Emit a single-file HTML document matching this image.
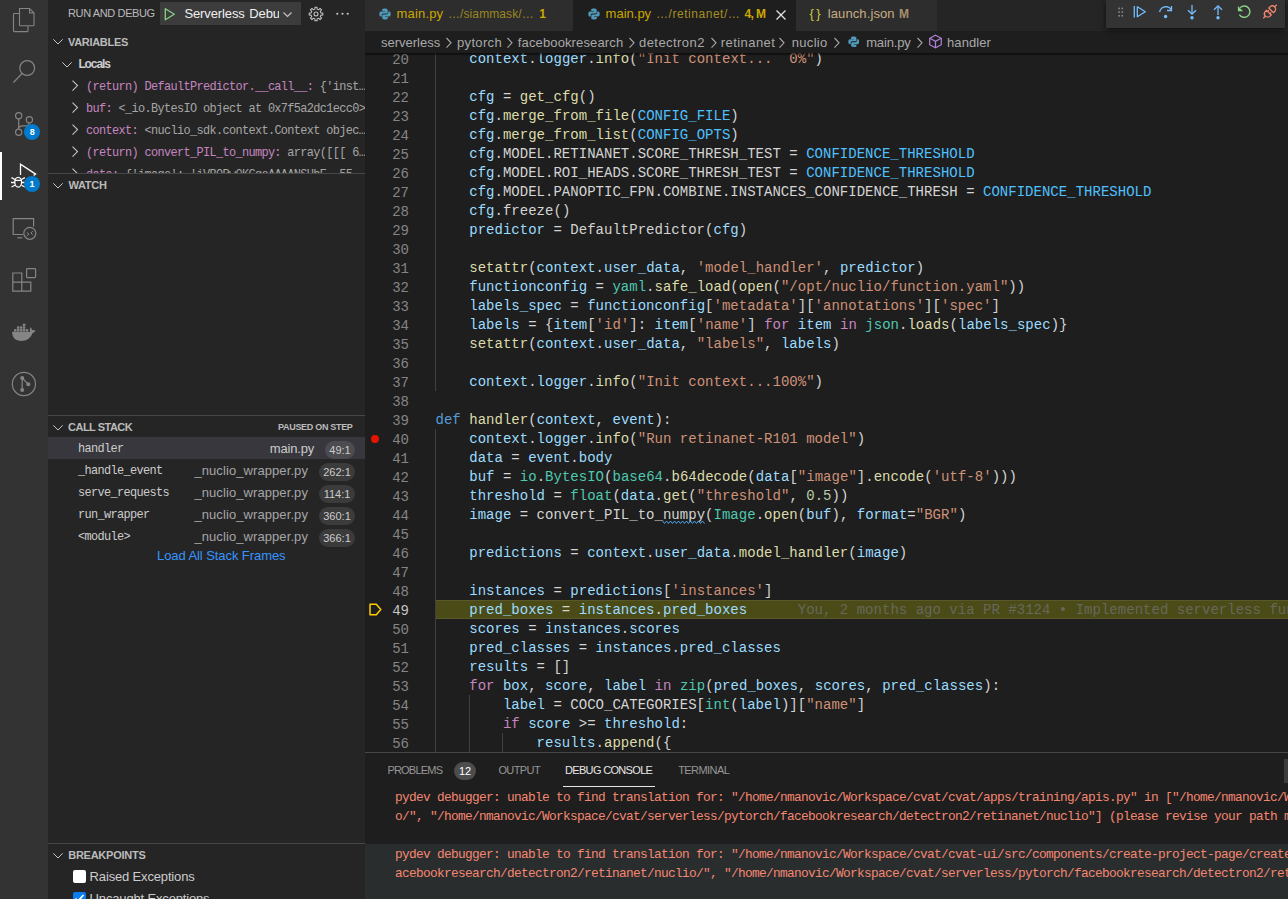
<!DOCTYPE html><html><head><meta charset="utf-8"><style>html,body{margin:0;padding:0}body{width:1288px;height:899px;overflow:hidden;position:relative;background:#1e1e1e}</style></head><body>
<div style="position:absolute;left:0px;top:0px;width:48px;height:899px;background:#333333;"></div>
<div style="position:absolute;left:0px;top:152px;width:2px;height:48px;background:#ffffff;"></div>
<svg style="position:absolute;left:0px;top:0px;" width="48" height="48" viewBox="0 0 48 48"><g fill="none" stroke="#858585" stroke-width="1.1"><path d="M19.5 13.5 H14.3 Q13.5 13.5 13.5 14.3 V30.8 Q13.5 31.6 14.3 31.6 H27.2 Q28 31.6 28 30.8 V26"/><path d="M19.5 8.5 H29.5 L34 13 V25 Q34 25.8 33.2 25.8 H20.3 Q19.5 25.8 19.5 25 Z"/><path d="M29.5 8.5 V13 H34"/></g></svg>
<svg style="position:absolute;left:0px;top:48px;" width="48" height="48" viewBox="0 0 48 48"><g fill="none" stroke="#858585" stroke-width="1.2"><circle cx="27.2" cy="20" r="7.4"/><path d="M22 25.5 L13.5 34.5"/></g></svg>
<svg style="position:absolute;left:0px;top:96px;" width="48" height="48" viewBox="0 0 48 48"><g fill="none" stroke="#858585" stroke-width="1.2"><circle cx="18.7" cy="19.7" r="3.1"/><circle cx="29.4" cy="23.7" r="3.1"/><circle cx="18.7" cy="36.2" r="3.1"/><path d="M18.7 22.8 V33.1"/><path d="M18.8 32 Q19.3 29.9 22.3 29.9 H25.2 Q28.9 29.9 29.4 26.8"/></g></svg>
<svg style="position:absolute;left:0px;top:144px;" width="48" height="48" viewBox="0 0 48 48"><g fill="none" stroke="#ffffff" stroke-width="1.3"><path d="M20.5 31 V20.3 L35.6 30.1 L33.6 31.4"/><ellipse cx="18.2" cy="38.2" rx="3.4" ry="4.9"/><path d="M14.8 36.3 H21.6 M11.5 33.6 L14.9 35.5 M24.9 33.6 L21.5 35.5 M11 38.5 H14.8 M25.4 38.5 H21.6 M11.5 43 L14.9 41.2 M24.9 43 L21.5 41.2"/></g></svg>
<svg style="position:absolute;left:0px;top:192px;" width="48" height="48" viewBox="0 0 48 48"><g fill="none" stroke="#858585" stroke-width="1.2"><path d="M23 42.5 H13.2 V26.6 H33.6 V34.5"/><path d="M17.3 45.8 H22.3"/><circle cx="29.8" cy="41.3" r="6"/><path d="M26.8 40.6 L28.9 42.1 L26.8 44 M32.8 39.2 L30.8 41.1 L32.8 42.7" stroke-width="1"/></g></svg>
<svg style="position:absolute;left:0px;top:248px;" width="48" height="48" viewBox="0 0 48 48"><g fill="none" stroke="#858585" stroke-width="1.2"><path d="M12.8 25 H21.8 V43.2 H12.8 Z M12.8 34.2 H30.8 V43.2 H21.8"/><rect x="26.6" y="20.6" width="9" height="9" rx="0.8"/></g></svg>
<svg style="position:absolute;left:0px;top:312px;" width="48" height="48" viewBox="0 0 48 48"><g fill="#858585"><path d="M12 19.8 H30 Q29.6 17 30.3 15.3 Q31.8 16.5 32.2 18.2 Q33.8 17.8 35.5 18.7 Q34.6 20.6 32.6 21 Q30 28.8 21 29 Q12.3 28.8 12 19.8 Z"/><rect x="14.0" y="17.1" width="2.45" height="2.35"/><rect x="16.95" y="17.1" width="2.45" height="2.35"/><rect x="19.9" y="17.1" width="2.45" height="2.35"/><rect x="22.85" y="17.1" width="2.45" height="2.35"/><rect x="25.8" y="17.1" width="2.45" height="2.35"/><rect x="16.95" y="14.4" width="2.45" height="2.35"/><rect x="19.9" y="14.4" width="2.45" height="2.35"/><rect x="22.85" y="14.4" width="2.45" height="2.35"/><rect x="22.85" y="11.7" width="2.45" height="2.35"/></g></svg>
<svg style="position:absolute;left:0px;top:360px;" width="48" height="48" viewBox="0 0 48 48"><g fill="none" stroke="#858585" stroke-width="1.2"><circle cx="23.9" cy="24" r="11.6"/><path d="M22.2 18 V30 M22.2 18 L28.3 24.3"/></g><g fill="#858585"><circle cx="22.2" cy="17.9" r="2"/><circle cx="28.3" cy="24.3" r="2"/><circle cx="22.2" cy="29.9" r="2"/></g></svg>
<div style="position:absolute;left:24.200000000000003px;top:124.1px;width:16px;height:16px;border-radius:8px;background:#007acc;color:#fff;font-family:'Liberation Sans', sans-serif;font-weight:700;font-size:9px;line-height:16px;text-align:center">8</div>
<div style="position:absolute;left:24px;top:175.6px;width:16px;height:16px;border-radius:8px;background:#007acc;color:#fff;font-family:'Liberation Sans', sans-serif;font-weight:700;font-size:9px;line-height:16px;text-align:center">1</div>
<div style="position:absolute;left:48px;top:0px;width:317px;height:899px;background:#252526;"></div>
<div id="t1" style="position:absolute;left:68.00px;top:3.19px;height:20px;line-height:20px;font-family:'Liberation Sans', sans-serif;font-size:11px;font-weight:400;color:#bbbbbb;letter-spacing:-0.375px;white-space:pre;">RUN AND DEBUG</div>
<div style="position:absolute;left:160px;top:2px;width:141px;height:23px;background:#3c3c3c;"></div>
<svg style="position:absolute;left:160px;top:2px;" width="20" height="23" viewBox="0 0 20 23"><path d="M5.3 6.8 V17.8 L14.3 12.3 Z" fill="none" stroke="#89d185" stroke-width="1.3" stroke-linejoin="round"/></svg>
<div style="position:absolute;left:0;top:0;width:279px;height:30px;overflow:hidden">
<div id="srv" style="position:absolute;left:184.40px;top:3.50px;height:20px;line-height:20px;font-family:'Liberation Sans', sans-serif;font-size:13px;font-weight:400;color:#f0f0f0;letter-spacing:-0.111px;white-space:pre;">Serverless</div>
<div style="position:absolute;left:249.30px;top:3.50px;height:20px;line-height:20px;font-family:'Liberation Sans', sans-serif;font-size:13px;font-weight:400;color:#f0f0f0;letter-spacing:-0.111px;white-space:pre;">Debug</div>
</div>
<svg style="position:absolute;left:280px;top:8px;" width="14" height="12" viewBox="0 0 14 12"><path d="M3.5 4.5 L7.5 8.5 L11.5 4.5" fill="none" stroke="#c5c5c5" stroke-width="1.1"/></svg>
<svg style="position:absolute;left:308.1px;top:5.7px;" width="16" height="16" viewBox="0 0 16 16"><g fill="none" stroke="#c5c5c5" stroke-width="1.05" stroke-linejoin="round"><circle cx="8" cy="8" r="2"/><path d="M6.88 3.13 L6.92 1.18 L9.08 1.18 L9.12 3.13 L10.65 3.76 L12.06 2.42 L13.58 3.94 L12.24 5.35 L12.87 6.88 L14.82 6.92 L14.82 9.08 L12.87 9.12 L12.24 10.65 L13.58 12.06 L12.06 13.58 L10.65 12.24 L9.12 12.87 L9.08 14.82 L6.92 14.82 L6.88 12.87 L5.35 12.24 L3.94 13.58 L2.42 12.06 L3.76 10.65 L3.13 9.12 L1.18 9.08 L1.18 6.92 L3.13 6.88 L3.76 5.35 L2.42 3.94 L3.94 2.42 L5.35 3.76 Z"/></g></svg>
<svg style="position:absolute;left:333.7px;top:10px;" width="18" height="8" viewBox="0 0 18 8"><g fill="#c5c5c5"><circle cx="3.3" cy="3.75" r="1.1"/><circle cx="8.5" cy="3.75" r="1.1"/><circle cx="13.7" cy="3.75" r="1.1"/></g></svg>
<svg style="position:absolute;left:52px;top:37.2px;" width="12" height="10" viewBox="0 0 12 10"><path d="M1.3 2.3 L6 7 L10.7 2.3" fill="none" stroke="#c5c5c5" stroke-width="1"/></svg>
<div id="t3" style="position:absolute;left:68.00px;top:32.19px;height:20px;line-height:20px;font-family:'Liberation Sans', sans-serif;font-size:11px;font-weight:700;color:#bbbbbb;letter-spacing:-0.312px;white-space:pre;">VARIABLES</div>
<svg style="position:absolute;left:61px;top:59.5px;" width="12" height="10" viewBox="0 0 12 10"><path d="M1.3 2.3 L6 7 L10.7 2.3" fill="none" stroke="#c5c5c5" stroke-width="1"/></svg>
<div id="t4" style="position:absolute;left:78.40px;top:53.84px;height:20px;line-height:20px;font-family:'Liberation Sans', sans-serif;font-size:12px;font-weight:700;color:#cccccc;letter-spacing:-1.100px;white-space:pre;">Locals</div>
<div style="position:absolute;left:48px;top:75px;width:317px;height:98px;overflow:hidden">
<svg style="position:absolute;left:22px;top:3.799999999999997px;" width="10" height="14" viewBox="0 0 10 14"><path d="M2.5 1.6 L7.5 6.6 L2.5 11.6" fill="none" stroke="#c5c5c5" stroke-width="1.1"/></svg>
<div style="position:absolute;left:38px;top:1.63px;height:20px;line-height:20px;font-family:'Liberation Mono', monospace;font-size:11.9px;letter-spacing:-0.640px;white-space:pre"><span style="color:#c586c0">(return) DefaultPredictor.__call__:</span><span style="color:#a5a5a5"> {'inst…</span></div>
<svg style="position:absolute;left:22px;top:25.799999999999997px;" width="10" height="14" viewBox="0 0 10 14"><path d="M2.5 1.6 L7.5 6.6 L2.5 11.6" fill="none" stroke="#c5c5c5" stroke-width="1.1"/></svg>
<div style="position:absolute;left:38px;top:23.63px;height:20px;line-height:20px;font-family:'Liberation Mono', monospace;font-size:11.9px;letter-spacing:-0.640px;white-space:pre"><span style="color:#c586c0">buf:</span><span style="color:#a5a5a5"> &lt;_io.BytesIO object at 0x7f5a2dc1ecc0&gt;</span></div>
<svg style="position:absolute;left:22px;top:47.80000000000001px;" width="10" height="14" viewBox="0 0 10 14"><path d="M2.5 1.6 L7.5 6.6 L2.5 11.6" fill="none" stroke="#c5c5c5" stroke-width="1.1"/></svg>
<div style="position:absolute;left:38px;top:45.63px;height:20px;line-height:20px;font-family:'Liberation Mono', monospace;font-size:11.9px;letter-spacing:-0.640px;white-space:pre"><span style="color:#c586c0">context:</span><span style="color:#a5a5a5"> &lt;nuclio_sdk.context.Context objec…</span></div>
<svg style="position:absolute;left:22px;top:69.80000000000001px;" width="10" height="14" viewBox="0 0 10 14"><path d="M2.5 1.6 L7.5 6.6 L2.5 11.6" fill="none" stroke="#c5c5c5" stroke-width="1.1"/></svg>
<div style="position:absolute;left:38px;top:67.63px;height:20px;line-height:20px;font-family:'Liberation Mono', monospace;font-size:11.9px;letter-spacing:-0.640px;white-space:pre"><span style="color:#c586c0">(return) convert_PIL_to_numpy:</span><span style="color:#a5a5a5"> array([[[ 6…</span></div>
<svg style="position:absolute;left:22px;top:91.80000000000001px;" width="10" height="14" viewBox="0 0 10 14"><path d="M2.5 1.6 L7.5 6.6 L2.5 11.6" fill="none" stroke="#c5c5c5" stroke-width="1.1"/></svg>
<div style="position:absolute;left:38px;top:89.63px;height:20px;line-height:20px;font-family:'Liberation Mono', monospace;font-size:11.9px;letter-spacing:-0.640px;white-space:pre"><span style="color:#c586c0">data:</span><span style="color:#a5a5a5"> {'image': 'iVBORw0KGgoAAAANSUhE… 55</span></div>
</div>
<div style="position:absolute;left:48px;top:173px;width:317px;height:1px;background:#474747;"></div>
<svg style="position:absolute;left:52px;top:181px;" width="12" height="10" viewBox="0 0 12 10"><path d="M1.3 2.3 L6 7 L10.7 2.3" fill="none" stroke="#c5c5c5" stroke-width="1"/></svg>
<div id="t5" style="position:absolute;left:68.40px;top:175.19px;height:20px;line-height:20px;font-family:'Liberation Sans', sans-serif;font-size:11px;font-weight:700;color:#bbbbbb;letter-spacing:-0.250px;white-space:pre;">WATCH</div>
<div style="position:absolute;left:48px;top:415px;width:317px;height:1px;background:#474747;"></div>
<svg style="position:absolute;left:52px;top:422.7px;" width="12" height="10" viewBox="0 0 12 10"><path d="M1.3 2.3 L6 7 L10.7 2.3" fill="none" stroke="#c5c5c5" stroke-width="1"/></svg>
<div id="t6" style="position:absolute;left:68.00px;top:417.19px;height:20px;line-height:20px;font-family:'Liberation Sans', sans-serif;font-size:11px;font-weight:700;color:#bbbbbb;letter-spacing:-0.500px;white-space:pre;">CALL STACK</div>
<div id="t7" style="position:absolute;left:278.00px;top:416.88px;height:20px;line-height:20px;font-family:'Liberation Sans', sans-serif;font-size:9px;font-weight:700;color:#bbbbbb;letter-spacing:-0.308px;white-space:pre;">PAUSED ON STEP</div>
<div style="position:absolute;left:48px;top:437px;width:317px;height:22px;background:#37373d;"></div>
<div style="position:absolute;left:78.00px;top:438.83px;height:20px;line-height:20px;font-family:'Liberation Mono', monospace;font-size:11.9px;font-weight:400;color:#cccccc;letter-spacing:-0.640px;white-space:pre;">handler</div>
<div style="position:absolute;left:325px;top:440.5px;width:30px;height:18px;background:rgba(255,255,255,0.10);border-radius:9px"></div>
<div style="position:absolute;left:325px;top:440.5px;width:30px;height:18px;line-height:18px;text-align:center;font-family:'Liberation Sans', sans-serif;font-size:11px;color:#cccccc">49:1</div>
<div id="t8" style="position:absolute;left:269.80px;top:438.50px;height:20px;line-height:20px;font-family:'Liberation Sans', sans-serif;font-size:13px;font-weight:400;color:#cccccc;letter-spacing:-0.167px;white-space:pre;">main.py</div>
<div style="position:absolute;left:78.00px;top:460.83px;height:20px;line-height:20px;font-family:'Liberation Mono', monospace;font-size:11.9px;font-weight:400;color:#cccccc;letter-spacing:-0.640px;white-space:pre;">_handle_event</div>
<div style="position:absolute;left:319px;top:462.5px;width:36px;height:18px;background:rgba(255,255,255,0.10);border-radius:9px"></div>
<div style="position:absolute;left:319px;top:462.5px;width:36px;height:18px;line-height:18px;text-align:center;font-family:'Liberation Sans', sans-serif;font-size:11px;color:#cccccc">262:1</div>
<div id="t9" style="position:absolute;left:194.40px;top:460.50px;height:20px;line-height:20px;font-family:'Liberation Sans', sans-serif;font-size:13px;font-weight:400;color:#a6a6a6;letter-spacing:0.088px;white-space:pre;">_nuclio_wrapper.py</div>
<div style="position:absolute;left:78.00px;top:482.83px;height:20px;line-height:20px;font-family:'Liberation Mono', monospace;font-size:11.9px;font-weight:400;color:#cccccc;letter-spacing:-0.640px;white-space:pre;">serve_requests</div>
<div style="position:absolute;left:319px;top:484.5px;width:36px;height:18px;background:rgba(255,255,255,0.10);border-radius:9px"></div>
<div style="position:absolute;left:319px;top:484.5px;width:36px;height:18px;line-height:18px;text-align:center;font-family:'Liberation Sans', sans-serif;font-size:11px;color:#cccccc">114:1</div>
<div id="t10" style="position:absolute;left:194.40px;top:482.50px;height:20px;line-height:20px;font-family:'Liberation Sans', sans-serif;font-size:13px;font-weight:400;color:#a6a6a6;letter-spacing:0.088px;white-space:pre;">_nuclio_wrapper.py</div>
<div style="position:absolute;left:78.00px;top:504.83px;height:20px;line-height:20px;font-family:'Liberation Mono', monospace;font-size:11.9px;font-weight:400;color:#cccccc;letter-spacing:-0.640px;white-space:pre;">run_wrapper</div>
<div style="position:absolute;left:319px;top:506.5px;width:36px;height:18px;background:rgba(255,255,255,0.10);border-radius:9px"></div>
<div style="position:absolute;left:319px;top:506.5px;width:36px;height:18px;line-height:18px;text-align:center;font-family:'Liberation Sans', sans-serif;font-size:11px;color:#cccccc">360:1</div>
<div id="t11" style="position:absolute;left:194.40px;top:504.50px;height:20px;line-height:20px;font-family:'Liberation Sans', sans-serif;font-size:13px;font-weight:400;color:#a6a6a6;letter-spacing:0.088px;white-space:pre;">_nuclio_wrapper.py</div>
<div style="position:absolute;left:78.00px;top:526.83px;height:20px;line-height:20px;font-family:'Liberation Mono', monospace;font-size:11.9px;font-weight:400;color:#cccccc;letter-spacing:-0.640px;white-space:pre;">&lt;module&gt;</div>
<div style="position:absolute;left:319px;top:528.5px;width:36px;height:18px;background:rgba(255,255,255,0.10);border-radius:9px"></div>
<div style="position:absolute;left:319px;top:528.5px;width:36px;height:18px;line-height:18px;text-align:center;font-family:'Liberation Sans', sans-serif;font-size:11px;color:#cccccc">366:1</div>
<div id="t12" style="position:absolute;left:194.40px;top:526.50px;height:20px;line-height:20px;font-family:'Liberation Sans', sans-serif;font-size:13px;font-weight:400;color:#a6a6a6;letter-spacing:0.088px;white-space:pre;">_nuclio_wrapper.py</div>
<div id="t13" style="position:absolute;left:157.00px;top:545.50px;height:20px;line-height:20px;font-family:'Liberation Sans', sans-serif;font-size:13px;font-weight:400;color:#3794ff;letter-spacing:-0.075px;white-space:pre;">Load All Stack Frames</div>
<div style="position:absolute;left:48px;top:843px;width:317px;height:1px;background:#474747;"></div>
<svg style="position:absolute;left:52px;top:850.6px;" width="12" height="10" viewBox="0 0 12 10"><path d="M1.3 2.3 L6 7 L10.7 2.3" fill="none" stroke="#c5c5c5" stroke-width="1"/></svg>
<div id="t14" style="position:absolute;left:68.20px;top:845.19px;height:20px;line-height:20px;font-family:'Liberation Sans', sans-serif;font-size:11px;font-weight:700;color:#bbbbbb;letter-spacing:-0.250px;white-space:pre;">BREAKPOINTS</div>
<div style="position:absolute;left:73px;top:870px;width:12.5px;height:12.5px;background:#ffffff;border-radius:2px"></div>
<div id="raised" style="position:absolute;left:89.60px;top:867.00px;height:20px;line-height:20px;font-family:'Liberation Sans', sans-serif;font-size:13px;font-weight:400;color:#cccccc;letter-spacing:-0.157px;white-space:pre;">Raised Exceptions</div>
<div style="position:absolute;left:73px;top:891.8px;width:12.5px;height:12.5px;background:#0a7ef0;border-radius:2px"></div>
<svg style="position:absolute;left:73px;top:891.8px;" width="13" height="13" viewBox="0 0 13 13"><path d="M2.5 6.5 L5 9 L10.5 3" fill="none" stroke="#fff" stroke-width="1.6"/></svg>
<div style="position:absolute;left:89.60px;top:888.50px;height:20px;line-height:20px;font-family:'Liberation Sans', sans-serif;font-size:13px;font-weight:400;color:#cccccc;letter-spacing:-0.157px;white-space:pre;">Uncaught Exceptions</div>
<div style="position:absolute;left:365px;top:0px;width:923px;height:31px;background:#252526;"></div>
<div style="position:absolute;left:365px;top:0px;width:208px;height:31px;background:#2d2d2d;"></div>
<div style="position:absolute;left:573px;top:0px;width:223px;height:31px;background:#1e1e1e;"></div>
<div style="position:absolute;left:796px;top:0px;width:141px;height:31px;background:#2d2d2d;"></div>
<svg style="position:absolute;left:379px;top:7.5px;" width="12" height="12" viewBox="0 0 12 12"><g transform="scale(1.0)"><path d="M5.8 0.5 C3 0.5 3.2 1.7 3.2 1.7 V3 H6 V3.5 H2 C2 3.5 0.3 3.4 0.3 6 C0.3 8.6 1.8 8.5 1.8 8.5 H2.8 V7.2 C2.8 7.2 2.7 5.6 4.3 5.6 H7.2 C7.2 5.6 8.7 5.7 8.7 4.2 V1.8 C8.7 1.8 8.9 0.5 5.8 0.5 Z" fill="#519aba"/><path d="M6.2 11.5 C9 11.5 8.8 10.3 8.8 10.3 V9 H6 V8.5 H10 C10 8.5 11.7 8.6 11.7 6 C11.7 3.4 10.2 3.5 10.2 3.5 H9.2 V4.8 C9.2 4.8 9.3 6.4 7.7 6.4 H4.8 C4.8 6.4 3.3 6.3 3.3 7.8 V10.2 C3.3 10.2 3.1 11.5 6.2 11.5 Z" fill="#519aba"/></g></svg>
<div id="t16" style="position:absolute;left:396.60px;top:3.50px;height:20px;line-height:20px;font-family:'Liberation Sans', sans-serif;font-size:13px;font-weight:400;color:#cca700;letter-spacing:0.167px;white-space:pre;">main.py</div>
<div id="t17" style="position:absolute;left:448.00px;top:3.84px;height:20px;line-height:20px;font-family:'Liberation Sans', sans-serif;font-size:12px;font-weight:400;color:#9c871f;letter-spacing:0.091px;white-space:pre;">…/siammask/…</div>
<div style="position:absolute;left:539.30px;top:3.84px;height:20px;line-height:20px;font-family:'Liberation Sans', sans-serif;font-size:12px;font-weight:700;color:#cca700;letter-spacing:0.000px;white-space:pre;">1</div>
<svg style="position:absolute;left:587.5px;top:7.5px;" width="12" height="12" viewBox="0 0 12 12"><g transform="scale(1.0)"><path d="M5.8 0.5 C3 0.5 3.2 1.7 3.2 1.7 V3 H6 V3.5 H2 C2 3.5 0.3 3.4 0.3 6 C0.3 8.6 1.8 8.5 1.8 8.5 H2.8 V7.2 C2.8 7.2 2.7 5.6 4.3 5.6 H7.2 C7.2 5.6 8.7 5.7 8.7 4.2 V1.8 C8.7 1.8 8.9 0.5 5.8 0.5 Z" fill="#519aba"/><path d="M6.2 11.5 C9 11.5 8.8 10.3 8.8 10.3 V9 H6 V8.5 H10 C10 8.5 11.7 8.6 11.7 6 C11.7 3.4 10.2 3.5 10.2 3.5 H9.2 V4.8 C9.2 4.8 9.3 6.4 7.7 6.4 H4.8 C4.8 6.4 3.3 6.3 3.3 7.8 V10.2 C3.3 10.2 3.1 11.5 6.2 11.5 Z" fill="#519aba"/></g></svg>
<div id="t18" style="position:absolute;left:605.60px;top:3.50px;height:20px;line-height:20px;font-family:'Liberation Sans', sans-serif;font-size:13px;font-weight:400;color:#cca700;letter-spacing:0.000px;white-space:pre;">main.py</div>
<div id="t19" style="position:absolute;left:656.00px;top:3.84px;height:20px;line-height:20px;font-family:'Liberation Sans', sans-serif;font-size:12px;font-weight:400;color:#a68f22;letter-spacing:0.542px;white-space:pre;">…/retinanet/…</div>
<div id="t20" style="position:absolute;left:744.60px;top:3.84px;height:20px;line-height:20px;font-family:'Liberation Sans', sans-serif;font-size:12px;font-weight:700;color:#cca700;letter-spacing:-0.667px;white-space:pre;">4, M</div>
<svg style="position:absolute;left:774px;top:8px;" width="14" height="14" viewBox="0 0 14 14"><path d="M2.5 2.5 L11.5 11.5 M11.5 2.5 L2.5 11.5" fill="none" stroke="#e8e8e8" stroke-width="1.2"/></svg>
<div style="position:absolute;left:809.50px;top:3.50px;height:20px;line-height:20px;font-family:'Liberation Sans', sans-serif;font-size:13px;font-weight:400;color:#cbcb41;letter-spacing:-0.600px;white-space:pre;">{ }</div>
<div id="t21" style="position:absolute;left:827.80px;top:3.50px;height:20px;line-height:20px;font-family:'Liberation Sans', sans-serif;font-size:13px;font-weight:400;color:#c9ae85;letter-spacing:0.100px;white-space:pre;">launch.json</div>
<div style="position:absolute;left:899.00px;top:3.84px;height:20px;line-height:20px;font-family:'Liberation Sans', sans-serif;font-size:12px;font-weight:700;color:#a88e6c;letter-spacing:0.000px;white-space:pre;">M</div>
<div style="position:absolute;left:365px;top:31px;width:923px;height:22px;background:#1e1e1e;"></div>
<div id="t22" style="position:absolute;left:381.00px;top:32.80px;height:20px;line-height:20px;font-family:'Liberation Sans', sans-serif;font-size:13px;font-weight:400;color:#a9a9a9;letter-spacing:0.000px;white-space:pre;">serverless</div>
<div id="t23" style="position:absolute;left:457.00px;top:32.80px;height:20px;line-height:20px;font-family:'Liberation Sans', sans-serif;font-size:13px;font-weight:400;color:#a9a9a9;letter-spacing:0.333px;white-space:pre;">pytorch</div>
<div id="t24" style="position:absolute;left:517.80px;top:32.80px;height:20px;line-height:20px;font-family:'Liberation Sans', sans-serif;font-size:13px;font-weight:400;color:#a9a9a9;letter-spacing:0.133px;white-space:pre;">facebookresearch</div>
<div id="t25" style="position:absolute;left:639.00px;top:32.80px;height:20px;line-height:20px;font-family:'Liberation Sans', sans-serif;font-size:13px;font-weight:400;color:#a9a9a9;letter-spacing:0.445px;white-space:pre;">detectron2</div>
<div id="t26" style="position:absolute;left:720.80px;top:32.80px;height:20px;line-height:20px;font-family:'Liberation Sans', sans-serif;font-size:13px;font-weight:400;color:#a9a9a9;letter-spacing:0.438px;white-space:pre;">retinanet</div>
<div id="t27" style="position:absolute;left:791.80px;top:32.80px;height:20px;line-height:20px;font-family:'Liberation Sans', sans-serif;font-size:13px;font-weight:400;color:#a9a9a9;letter-spacing:0.300px;white-space:pre;">nuclio</div>
<div id="t28" style="position:absolute;left:866.20px;top:32.80px;height:20px;line-height:20px;font-family:'Liberation Sans', sans-serif;font-size:13px;font-weight:400;color:#a9a9a9;letter-spacing:-0.167px;white-space:pre;">main.py</div>
<div id="t29" style="position:absolute;left:947.00px;top:32.80px;height:20px;line-height:20px;font-family:'Liberation Sans', sans-serif;font-size:13px;font-weight:400;color:#a9a9a9;letter-spacing:0.083px;white-space:pre;">handler</div>
<svg style="position:absolute;left:445.4px;top:36px;" width="8" height="14" viewBox="0 0 8 14"><path d="M1.5 2 L6 6.8 L1.5 11.6" fill="none" stroke="#a9a9a9" stroke-width="1.1"/></svg>
<svg style="position:absolute;left:506.2px;top:36px;" width="8" height="14" viewBox="0 0 8 14"><path d="M1.5 2 L6 6.8 L1.5 11.6" fill="none" stroke="#a9a9a9" stroke-width="1.1"/></svg>
<svg style="position:absolute;left:627.8px;top:36px;" width="8" height="14" viewBox="0 0 8 14"><path d="M1.5 2 L6 6.8 L1.5 11.6" fill="none" stroke="#a9a9a9" stroke-width="1.1"/></svg>
<svg style="position:absolute;left:710.0px;top:36px;" width="8" height="14" viewBox="0 0 8 14"><path d="M1.5 2 L6 6.8 L1.5 11.6" fill="none" stroke="#a9a9a9" stroke-width="1.1"/></svg>
<svg style="position:absolute;left:778.0px;top:36px;" width="8" height="14" viewBox="0 0 8 14"><path d="M1.5 2 L6 6.8 L1.5 11.6" fill="none" stroke="#a9a9a9" stroke-width="1.1"/></svg>
<svg style="position:absolute;left:832.5px;top:36px;" width="8" height="14" viewBox="0 0 8 14"><path d="M1.5 2 L6 6.8 L1.5 11.6" fill="none" stroke="#a9a9a9" stroke-width="1.1"/></svg>
<svg style="position:absolute;left:915.9px;top:36px;" width="8" height="14" viewBox="0 0 8 14"><path d="M1.5 2 L6 6.8 L1.5 11.6" fill="none" stroke="#a9a9a9" stroke-width="1.1"/></svg>
<svg style="position:absolute;left:847.8px;top:36.2px;" width="11.5" height="11.5" viewBox="0 0 11.5 11.5"><g transform="scale(0.9583333333333334)"><path d="M5.8 0.5 C3 0.5 3.2 1.7 3.2 1.7 V3 H6 V3.5 H2 C2 3.5 0.3 3.4 0.3 6 C0.3 8.6 1.8 8.5 1.8 8.5 H2.8 V7.2 C2.8 7.2 2.7 5.6 4.3 5.6 H7.2 C7.2 5.6 8.7 5.7 8.7 4.2 V1.8 C8.7 1.8 8.9 0.5 5.8 0.5 Z" fill="#519aba"/><path d="M6.2 11.5 C9 11.5 8.8 10.3 8.8 10.3 V9 H6 V8.5 H10 C10 8.5 11.7 8.6 11.7 6 C11.7 3.4 10.2 3.5 10.2 3.5 H9.2 V4.8 C9.2 4.8 9.3 6.4 7.7 6.4 H4.8 C4.8 6.4 3.3 6.3 3.3 7.8 V10.2 C3.3 10.2 3.1 11.5 6.2 11.5 Z" fill="#519aba"/></g></svg>
<svg style="position:absolute;left:928px;top:33.8px;" width="15" height="15" viewBox="0 0 15 15"><g fill="none" stroke="#b180d7" stroke-width="1.2"><path d="M7.5 1.2 L13.3 4.3 V10.7 L7.5 13.8 L1.7 10.7 V4.3 Z"/><path d="M1.7 4.3 L7.5 7.4 L13.3 4.3 M7.5 7.4 V13.8"/></g></svg>
<div style="position:absolute;left:365px;top:53px;width:923px;height:699px;overflow:hidden">
<div style="position:absolute;left:0;width:44px;top:-2.2px;height:19px;line-height:19px;text-align:right;font-family:'Liberation Mono', monospace;font-size:14px;color:#858585">20</div>
<div style="position:absolute;left:70.5px;top:-3.4px;height:19px;line-height:19px;font-family:'Liberation Mono', monospace;font-size:14px;letter-spacing:0.021px;color:#d4d4d4;white-space:pre">    <span style="color:#9cdcfe">context</span>.<span style="color:#9cdcfe">logger</span>.<span style="color:#dcdcaa">info</span>(<span style="color:#ce9178">&quot;Init context...  0%&quot;</span>)</div>
<div style="position:absolute;left:0;width:44px;top:16.8px;height:19px;line-height:19px;text-align:right;font-family:'Liberation Mono', monospace;font-size:14px;color:#858585">21</div>
<div style="position:absolute;left:70.5px;top:15.6px;height:19px;line-height:19px;font-family:'Liberation Mono', monospace;font-size:14px;letter-spacing:0.021px;color:#d4d4d4;white-space:pre"></div>
<div style="position:absolute;left:0;width:44px;top:35.8px;height:19px;line-height:19px;text-align:right;font-family:'Liberation Mono', monospace;font-size:14px;color:#858585">22</div>
<div style="position:absolute;left:70.5px;top:34.6px;height:19px;line-height:19px;font-family:'Liberation Mono', monospace;font-size:14px;letter-spacing:0.021px;color:#d4d4d4;white-space:pre">    <span style="color:#9cdcfe">cfg</span> = <span style="color:#dcdcaa">get_cfg</span>()</div>
<div style="position:absolute;left:0;width:44px;top:54.8px;height:19px;line-height:19px;text-align:right;font-family:'Liberation Mono', monospace;font-size:14px;color:#858585">23</div>
<div style="position:absolute;left:70.5px;top:53.6px;height:19px;line-height:19px;font-family:'Liberation Mono', monospace;font-size:14px;letter-spacing:0.021px;color:#d4d4d4;white-space:pre">    <span style="color:#9cdcfe">cfg</span>.<span style="color:#dcdcaa">merge_from_file</span>(<span style="color:#4fc1ff">CONFIG_FILE</span>)</div>
<div style="position:absolute;left:0;width:44px;top:73.8px;height:19px;line-height:19px;text-align:right;font-family:'Liberation Mono', monospace;font-size:14px;color:#858585">24</div>
<div style="position:absolute;left:70.5px;top:72.6px;height:19px;line-height:19px;font-family:'Liberation Mono', monospace;font-size:14px;letter-spacing:0.021px;color:#d4d4d4;white-space:pre">    <span style="color:#9cdcfe">cfg</span>.<span style="color:#dcdcaa">merge_from_list</span>(<span style="color:#4fc1ff">CONFIG_OPTS</span>)</div>
<div style="position:absolute;left:0;width:44px;top:92.8px;height:19px;line-height:19px;text-align:right;font-family:'Liberation Mono', monospace;font-size:14px;color:#858585">25</div>
<div style="position:absolute;left:70.5px;top:91.6px;height:19px;line-height:19px;font-family:'Liberation Mono', monospace;font-size:14px;letter-spacing:0.021px;color:#d4d4d4;white-space:pre">    <span style="color:#9cdcfe">cfg</span>.MODEL.RETINANET.SCORE_THRESH_TEST = <span style="color:#4fc1ff">CONFIDENCE_THRESHOLD</span></div>
<div style="position:absolute;left:0;width:44px;top:111.8px;height:19px;line-height:19px;text-align:right;font-family:'Liberation Mono', monospace;font-size:14px;color:#858585">26</div>
<div style="position:absolute;left:70.5px;top:110.6px;height:19px;line-height:19px;font-family:'Liberation Mono', monospace;font-size:14px;letter-spacing:0.021px;color:#d4d4d4;white-space:pre">    <span style="color:#9cdcfe">cfg</span>.MODEL.ROI_HEADS.SCORE_THRESH_TEST = <span style="color:#4fc1ff">CONFIDENCE_THRESHOLD</span></div>
<div style="position:absolute;left:0;width:44px;top:130.8px;height:19px;line-height:19px;text-align:right;font-family:'Liberation Mono', monospace;font-size:14px;color:#858585">27</div>
<div style="position:absolute;left:70.5px;top:129.6px;height:19px;line-height:19px;font-family:'Liberation Mono', monospace;font-size:14px;letter-spacing:0.021px;color:#d4d4d4;white-space:pre">    <span style="color:#9cdcfe">cfg</span>.MODEL.PANOPTIC_FPN.COMBINE.INSTANCES_CONFIDENCE_THRESH = <span style="color:#4fc1ff">CONFIDENCE_THRESHOLD</span></div>
<div style="position:absolute;left:0;width:44px;top:149.8px;height:19px;line-height:19px;text-align:right;font-family:'Liberation Mono', monospace;font-size:14px;color:#858585">28</div>
<div style="position:absolute;left:70.5px;top:148.6px;height:19px;line-height:19px;font-family:'Liberation Mono', monospace;font-size:14px;letter-spacing:0.021px;color:#d4d4d4;white-space:pre">    <span style="color:#9cdcfe">cfg</span>.<span style="color:#d4d4d4">freeze</span>()</div>
<div style="position:absolute;left:0;width:44px;top:168.8px;height:19px;line-height:19px;text-align:right;font-family:'Liberation Mono', monospace;font-size:14px;color:#858585">29</div>
<div style="position:absolute;left:70.5px;top:167.6px;height:19px;line-height:19px;font-family:'Liberation Mono', monospace;font-size:14px;letter-spacing:0.021px;color:#d4d4d4;white-space:pre">    <span style="color:#9cdcfe">predictor</span> = DefaultPredictor(<span style="color:#9cdcfe">cfg</span>)</div>
<div style="position:absolute;left:0;width:44px;top:187.8px;height:19px;line-height:19px;text-align:right;font-family:'Liberation Mono', monospace;font-size:14px;color:#858585">30</div>
<div style="position:absolute;left:70.5px;top:186.6px;height:19px;line-height:19px;font-family:'Liberation Mono', monospace;font-size:14px;letter-spacing:0.021px;color:#d4d4d4;white-space:pre"></div>
<div style="position:absolute;left:0;width:44px;top:206.8px;height:19px;line-height:19px;text-align:right;font-family:'Liberation Mono', monospace;font-size:14px;color:#858585">31</div>
<div style="position:absolute;left:70.5px;top:205.6px;height:19px;line-height:19px;font-family:'Liberation Mono', monospace;font-size:14px;letter-spacing:0.021px;color:#d4d4d4;white-space:pre">    <span style="color:#dcdcaa">setattr</span>(<span style="color:#9cdcfe">context</span>.<span style="color:#9cdcfe">user_data</span>, <span style="color:#ce9178">&#x27;model_handler&#x27;</span>, <span style="color:#9cdcfe">predictor</span>)</div>
<div style="position:absolute;left:0;width:44px;top:225.8px;height:19px;line-height:19px;text-align:right;font-family:'Liberation Mono', monospace;font-size:14px;color:#858585">32</div>
<div style="position:absolute;left:70.5px;top:224.6px;height:19px;line-height:19px;font-family:'Liberation Mono', monospace;font-size:14px;letter-spacing:0.021px;color:#d4d4d4;white-space:pre">    <span style="color:#9cdcfe">functionconfig</span> = <span style="color:#4ec9b0">yaml</span>.<span style="color:#dcdcaa">safe_load</span>(<span style="color:#dcdcaa">open</span>(<span style="color:#ce9178">&quot;/opt/nuclio/function.yaml&quot;</span>))</div>
<div style="position:absolute;left:0;width:44px;top:244.8px;height:19px;line-height:19px;text-align:right;font-family:'Liberation Mono', monospace;font-size:14px;color:#858585">33</div>
<div style="position:absolute;left:70.5px;top:243.6px;height:19px;line-height:19px;font-family:'Liberation Mono', monospace;font-size:14px;letter-spacing:0.021px;color:#d4d4d4;white-space:pre">    <span style="color:#9cdcfe">labels_spec</span> = <span style="color:#9cdcfe">functionconfig</span>[<span style="color:#ce9178">&#x27;metadata&#x27;</span>][<span style="color:#ce9178">&#x27;annotations&#x27;</span>][<span style="color:#ce9178">&#x27;spec&#x27;</span>]</div>
<div style="position:absolute;left:0;width:44px;top:263.8px;height:19px;line-height:19px;text-align:right;font-family:'Liberation Mono', monospace;font-size:14px;color:#858585">34</div>
<div style="position:absolute;left:70.5px;top:262.6px;height:19px;line-height:19px;font-family:'Liberation Mono', monospace;font-size:14px;letter-spacing:0.021px;color:#d4d4d4;white-space:pre">    <span style="color:#9cdcfe">labels</span> = {<span style="color:#9cdcfe">item</span>[<span style="color:#ce9178">&#x27;id&#x27;</span>]: <span style="color:#9cdcfe">item</span>[<span style="color:#ce9178">&#x27;name&#x27;</span>] <span style="color:#c586c0">for</span> <span style="color:#9cdcfe">item</span> <span style="color:#c586c0">in</span> <span style="color:#4ec9b0">json</span>.<span style="color:#dcdcaa">loads</span>(<span style="color:#9cdcfe">labels_spec</span>)}</div>
<div style="position:absolute;left:0;width:44px;top:282.8px;height:19px;line-height:19px;text-align:right;font-family:'Liberation Mono', monospace;font-size:14px;color:#858585">35</div>
<div style="position:absolute;left:70.5px;top:281.6px;height:19px;line-height:19px;font-family:'Liberation Mono', monospace;font-size:14px;letter-spacing:0.021px;color:#d4d4d4;white-space:pre">    <span style="color:#dcdcaa">setattr</span>(<span style="color:#9cdcfe">context</span>.<span style="color:#9cdcfe">user_data</span>, <span style="color:#ce9178">&quot;labels&quot;</span>, <span style="color:#9cdcfe">labels</span>)</div>
<div style="position:absolute;left:0;width:44px;top:301.8px;height:19px;line-height:19px;text-align:right;font-family:'Liberation Mono', monospace;font-size:14px;color:#858585">36</div>
<div style="position:absolute;left:70.5px;top:300.6px;height:19px;line-height:19px;font-family:'Liberation Mono', monospace;font-size:14px;letter-spacing:0.021px;color:#d4d4d4;white-space:pre"></div>
<div style="position:absolute;left:0;width:44px;top:320.8px;height:19px;line-height:19px;text-align:right;font-family:'Liberation Mono', monospace;font-size:14px;color:#858585">37</div>
<div style="position:absolute;left:70.5px;top:319.6px;height:19px;line-height:19px;font-family:'Liberation Mono', monospace;font-size:14px;letter-spacing:0.021px;color:#d4d4d4;white-space:pre">    <span style="color:#9cdcfe">context</span>.<span style="color:#9cdcfe">logger</span>.<span style="color:#dcdcaa">info</span>(<span style="color:#ce9178">&quot;Init context...100%&quot;</span>)</div>
<div style="position:absolute;left:0;width:44px;top:339.8px;height:19px;line-height:19px;text-align:right;font-family:'Liberation Mono', monospace;font-size:14px;color:#858585">38</div>
<div style="position:absolute;left:70.5px;top:338.6px;height:19px;line-height:19px;font-family:'Liberation Mono', monospace;font-size:14px;letter-spacing:0.021px;color:#d4d4d4;white-space:pre"></div>
<div style="position:absolute;left:0;width:44px;top:358.8px;height:19px;line-height:19px;text-align:right;font-family:'Liberation Mono', monospace;font-size:14px;color:#858585">39</div>
<div style="position:absolute;left:70.5px;top:357.6px;height:19px;line-height:19px;font-family:'Liberation Mono', monospace;font-size:14px;letter-spacing:0.021px;color:#d4d4d4;white-space:pre"><span style="color:#569cd6">def</span> <span style="color:#dcdcaa">handler</span>(<span style="color:#9cdcfe">context</span>, <span style="color:#9cdcfe">event</span>):</div>
<div style="position:absolute;left:0;width:44px;top:377.8px;height:19px;line-height:19px;text-align:right;font-family:'Liberation Mono', monospace;font-size:14px;color:#858585">40</div>
<div style="position:absolute;left:70.5px;top:376.6px;height:19px;line-height:19px;font-family:'Liberation Mono', monospace;font-size:14px;letter-spacing:0.021px;color:#d4d4d4;white-space:pre">    <span style="color:#9cdcfe">context</span>.<span style="color:#9cdcfe">logger</span>.<span style="color:#dcdcaa">info</span>(<span style="color:#ce9178">&quot;Run retinanet-R101 model&quot;</span>)</div>
<div style="position:absolute;left:0;width:44px;top:396.8px;height:19px;line-height:19px;text-align:right;font-family:'Liberation Mono', monospace;font-size:14px;color:#858585">41</div>
<div style="position:absolute;left:70.5px;top:395.6px;height:19px;line-height:19px;font-family:'Liberation Mono', monospace;font-size:14px;letter-spacing:0.021px;color:#d4d4d4;white-space:pre">    <span style="color:#9cdcfe">data</span> = <span style="color:#9cdcfe">event</span>.<span style="color:#9cdcfe">body</span></div>
<div style="position:absolute;left:0;width:44px;top:415.8px;height:19px;line-height:19px;text-align:right;font-family:'Liberation Mono', monospace;font-size:14px;color:#858585">42</div>
<div style="position:absolute;left:70.5px;top:414.6px;height:19px;line-height:19px;font-family:'Liberation Mono', monospace;font-size:14px;letter-spacing:0.021px;color:#d4d4d4;white-space:pre">    <span style="color:#9cdcfe">buf</span> = <span style="color:#4ec9b0">io</span>.<span style="color:#4ec9b0">BytesIO</span>(<span style="color:#4ec9b0">base64</span>.<span style="color:#dcdcaa">b64decode</span>(<span style="color:#9cdcfe">data</span>[<span style="color:#ce9178">&quot;image&quot;</span>].<span style="color:#dcdcaa">encode</span>(<span style="color:#ce9178">&#x27;utf-8&#x27;</span>)))</div>
<div style="position:absolute;left:0;width:44px;top:434.8px;height:19px;line-height:19px;text-align:right;font-family:'Liberation Mono', monospace;font-size:14px;color:#858585">43</div>
<div style="position:absolute;left:70.5px;top:433.6px;height:19px;line-height:19px;font-family:'Liberation Mono', monospace;font-size:14px;letter-spacing:0.021px;color:#d4d4d4;white-space:pre">    <span style="color:#9cdcfe">threshold</span> = <span style="color:#4ec9b0">float</span>(<span style="color:#9cdcfe">data</span>.<span style="color:#dcdcaa">get</span>(<span style="color:#ce9178">&quot;threshold&quot;</span>, <span style="color:#b5cea8">0.5</span>))</div>
<div style="position:absolute;left:0;width:44px;top:453.8px;height:19px;line-height:19px;text-align:right;font-family:'Liberation Mono', monospace;font-size:14px;color:#858585">44</div>
<div style="position:absolute;left:70.5px;top:452.6px;height:19px;line-height:19px;font-family:'Liberation Mono', monospace;font-size:14px;letter-spacing:0.021px;color:#d4d4d4;white-space:pre">    <span style="color:#9cdcfe">image</span> = <span style="color:#d4d4d4">convert_PIL_to_numpy</span>(<span style="color:#4ec9b0">Image</span>.<span style="color:#dcdcaa">open</span>(<span style="color:#9cdcfe">buf</span>), <span style="color:#9cdcfe">format</span>=<span style="color:#ce9178">&quot;BGR&quot;</span>)</div>
<div style="position:absolute;left:0;width:44px;top:472.8px;height:19px;line-height:19px;text-align:right;font-family:'Liberation Mono', monospace;font-size:14px;color:#858585">45</div>
<div style="position:absolute;left:70.5px;top:471.6px;height:19px;line-height:19px;font-family:'Liberation Mono', monospace;font-size:14px;letter-spacing:0.021px;color:#d4d4d4;white-space:pre"></div>
<div style="position:absolute;left:0;width:44px;top:491.8px;height:19px;line-height:19px;text-align:right;font-family:'Liberation Mono', monospace;font-size:14px;color:#858585">46</div>
<div style="position:absolute;left:70.5px;top:490.6px;height:19px;line-height:19px;font-family:'Liberation Mono', monospace;font-size:14px;letter-spacing:0.021px;color:#d4d4d4;white-space:pre">    <span style="color:#9cdcfe">predictions</span> = <span style="color:#9cdcfe">context</span>.<span style="color:#9cdcfe">user_data</span>.<span style="color:#dcdcaa">model_handler</span>(<span style="color:#9cdcfe">image</span>)</div>
<div style="position:absolute;left:0;width:44px;top:510.8px;height:19px;line-height:19px;text-align:right;font-family:'Liberation Mono', monospace;font-size:14px;color:#858585">47</div>
<div style="position:absolute;left:70.5px;top:509.6px;height:19px;line-height:19px;font-family:'Liberation Mono', monospace;font-size:14px;letter-spacing:0.021px;color:#d4d4d4;white-space:pre"></div>
<div style="position:absolute;left:0;width:44px;top:529.8px;height:19px;line-height:19px;text-align:right;font-family:'Liberation Mono', monospace;font-size:14px;color:#858585">48</div>
<div style="position:absolute;left:70.5px;top:528.6px;height:19px;line-height:19px;font-family:'Liberation Mono', monospace;font-size:14px;letter-spacing:0.021px;color:#d4d4d4;white-space:pre">    <span style="color:#9cdcfe">instances</span> = <span style="color:#9cdcfe">predictions</span>[<span style="color:#ce9178">&#x27;instances&#x27;</span>]</div>
<div style="position:absolute;left:70px;top:547px;width:900px;height:19px;background:#4b4b18;box-shadow:inset 0 1px 0 #58582a, inset 0 -1px 0 #58582a"></div>
<div style="position:absolute;left:0;width:44px;top:548.8px;height:19px;line-height:19px;text-align:right;font-family:'Liberation Mono', monospace;font-size:14px;color:#c6c6c6">49</div>
<div style="position:absolute;left:70.5px;top:547.6px;height:19px;line-height:19px;font-family:'Liberation Mono', monospace;font-size:14px;letter-spacing:0.021px;color:#d4d4d4;white-space:pre">    <span style="color:#9cdcfe">pred_boxes</span> = <span style="color:#9cdcfe">instances</span>.<span style="color:#9cdcfe">pred_boxes</span><span style="color:#66685a">      You, 2 months ago via PR #3124 • Implemented serverless function for retinanet</span></div>
<div style="position:absolute;left:0;width:44px;top:567.8px;height:19px;line-height:19px;text-align:right;font-family:'Liberation Mono', monospace;font-size:14px;color:#858585">50</div>
<div style="position:absolute;left:70.5px;top:566.6px;height:19px;line-height:19px;font-family:'Liberation Mono', monospace;font-size:14px;letter-spacing:0.021px;color:#d4d4d4;white-space:pre">    <span style="color:#9cdcfe">scores</span> = <span style="color:#9cdcfe">instances</span>.<span style="color:#9cdcfe">scores</span></div>
<div style="position:absolute;left:0;width:44px;top:586.8px;height:19px;line-height:19px;text-align:right;font-family:'Liberation Mono', monospace;font-size:14px;color:#858585">51</div>
<div style="position:absolute;left:70.5px;top:585.6px;height:19px;line-height:19px;font-family:'Liberation Mono', monospace;font-size:14px;letter-spacing:0.021px;color:#d4d4d4;white-space:pre">    <span style="color:#9cdcfe">pred_classes</span> = <span style="color:#9cdcfe">instances</span>.<span style="color:#9cdcfe">pred_classes</span></div>
<div style="position:absolute;left:0;width:44px;top:605.8px;height:19px;line-height:19px;text-align:right;font-family:'Liberation Mono', monospace;font-size:14px;color:#858585">52</div>
<div style="position:absolute;left:70.5px;top:604.6px;height:19px;line-height:19px;font-family:'Liberation Mono', monospace;font-size:14px;letter-spacing:0.021px;color:#d4d4d4;white-space:pre">    <span style="color:#9cdcfe">results</span> = []</div>
<div style="position:absolute;left:0;width:44px;top:624.8px;height:19px;line-height:19px;text-align:right;font-family:'Liberation Mono', monospace;font-size:14px;color:#858585">53</div>
<div style="position:absolute;left:70.5px;top:623.6px;height:19px;line-height:19px;font-family:'Liberation Mono', monospace;font-size:14px;letter-spacing:0.021px;color:#d4d4d4;white-space:pre">    <span style="color:#c586c0">for</span> <span style="color:#9cdcfe">box</span>, <span style="color:#9cdcfe">score</span>, <span style="color:#9cdcfe">label</span> <span style="color:#c586c0">in</span> <span style="color:#4ec9b0">zip</span>(<span style="color:#9cdcfe">pred_boxes</span>, <span style="color:#9cdcfe">scores</span>, <span style="color:#9cdcfe">pred_classes</span>):</div>
<div style="position:absolute;left:0;width:44px;top:643.8px;height:19px;line-height:19px;text-align:right;font-family:'Liberation Mono', monospace;font-size:14px;color:#858585">54</div>
<div style="position:absolute;left:70.5px;top:642.6px;height:19px;line-height:19px;font-family:'Liberation Mono', monospace;font-size:14px;letter-spacing:0.021px;color:#d4d4d4;white-space:pre">        <span style="color:#9cdcfe">label</span> = COCO_CATEGORIES[<span style="color:#4ec9b0">int</span>(<span style="color:#9cdcfe">label</span>)][<span style="color:#ce9178">&quot;name&quot;</span>]</div>
<div style="position:absolute;left:0;width:44px;top:662.8px;height:19px;line-height:19px;text-align:right;font-family:'Liberation Mono', monospace;font-size:14px;color:#858585">55</div>
<div style="position:absolute;left:70.5px;top:661.6px;height:19px;line-height:19px;font-family:'Liberation Mono', monospace;font-size:14px;letter-spacing:0.021px;color:#d4d4d4;white-space:pre">        <span style="color:#c586c0">if</span> <span style="color:#9cdcfe">score</span> &gt;= <span style="color:#9cdcfe">threshold</span>:</div>
<div style="position:absolute;left:0;width:44px;top:681.8px;height:19px;line-height:19px;text-align:right;font-family:'Liberation Mono', monospace;font-size:14px;color:#858585">56</div>
<div style="position:absolute;left:70.5px;top:680.6px;height:19px;line-height:19px;font-family:'Liberation Mono', monospace;font-size:14px;letter-spacing:0.021px;color:#d4d4d4;white-space:pre">            <span style="color:#9cdcfe">results</span>.<span style="color:#dcdcaa">append</span>({</div>
<div style="position:absolute;left:70px;top:0px;width:1px;height:338px;background:#404040"></div>
<div style="position:absolute;left:70px;top:376px;width:1px;height:323px;background:#404040"></div>
<div style="position:absolute;left:104px;top:642px;width:1px;height:57px;background:#404040"></div>
<div style="position:absolute;left:137px;top:680px;width:1px;height:19px;background:#404040"></div>
</div>
<div style="position:absolute;left:370.7px;top:434.5px;width:8.5px;height:8.5px;border-radius:50%;background:#e51400"></div>
<svg style="position:absolute;left:368px;top:602px;" width="15" height="15" viewBox="0 0 15 15"><path d="M2 2.2 H8.3 L12.8 7.5 L8.3 12.8 H2 Z" fill="none" stroke="#ffcc00" stroke-width="1.5" stroke-linejoin="round"/></svg>
<svg style="position:absolute;left:662px;top:520px" width="44" height="5"><path d="M0.5 1 L2.5 3.5 L4.5 1 L6.5 3.5 L8.5 1 L10.5 3.5 L12.5 1 L14.5 3.5 L16.5 1 L18.5 3.5 L20.5 1 L22.5 3.5 L24.5 1 L26.5 3.5 L28.5 1 L30.5 3.5 L32.5 1 L34.5 3.5 L36.5 1 L38.5 3.5 L40.5 1 L42.5 3.5" fill="none" stroke="#4da3e8" stroke-width="1"/></svg>
<div style="position:absolute;left:365px;top:53px;width:923px;height:3px;background:linear-gradient(#000000aa,#00000000)"></div>
<div style="position:absolute;left:1106px;top:0;width:179px;height:28px;background:#333333;box-shadow:0 2px 6px rgba(0,0,0,0.6)"></div>
<svg style="position:absolute;left:1116px;top:5px;" width="10" height="16" viewBox="0 0 10 16"><g fill="#8a8a8a"><rect x="2.3" y="2.6" width="1.6" height="1.6"/><rect x="5.5" y="2.6" width="1.6" height="1.6"/><rect x="2.3" y="6.3" width="1.6" height="1.6"/><rect x="5.5" y="6.3" width="1.6" height="1.6"/><rect x="2.3" y="10" width="1.6" height="1.6"/><rect x="5.5" y="10" width="1.6" height="1.6"/></g></svg>
<svg style="position:absolute;left:1132px;top:4px;" width="16" height="16" viewBox="0 0 16 16"><g fill="none" stroke="#75beff" stroke-width="1.3"><path d="M2.3 2 V13.5"/><path d="M5.3 2.8 L13.3 7.75 L5.3 12.7 Z" stroke-linejoin="round"/></g></svg>
<svg style="position:absolute;left:1158px;top:3px;" width="16" height="18" viewBox="0 0 16 18"><g fill="none" stroke="#75beff" stroke-width="1.3"><path d="M1.5 9 Q3 3.8 8 3.6 Q11.5 3.6 13.5 7"/><path d="M13.5 3 V7.5 H9"/></g><circle cx="7.6" cy="13.5" r="1.7" fill="#75beff"/></svg>
<svg style="position:absolute;left:1184px;top:3px;" width="16" height="18" viewBox="0 0 16 18"><g fill="none" stroke="#75beff" stroke-width="1.3"><path d="M8 2 V11"/><path d="M4 7.3 L8 11 L12 7.3"/></g><circle cx="8" cy="14.7" r="1.7" fill="#75beff"/></svg>
<svg style="position:absolute;left:1210px;top:3px;" width="16" height="18" viewBox="0 0 16 18"><g fill="none" stroke="#75beff" stroke-width="1.3"><path d="M8 3 V12"/><path d="M4 6.7 L8 2.9 L12 6.7"/></g><circle cx="8" cy="14.7" r="1.7" fill="#75beff"/></svg>
<svg style="position:absolute;left:1236px;top:3px;" width="16" height="18" viewBox="0 0 16 18"><g fill="none" stroke="#89d185" stroke-width="1.4"><path d="M4.2 4.7 A5.65 5.65 0 1 1 3.4 11.6"/></g><path d="M1.9 2.9 V8.2 H7.2 Z" fill="#89d185"/></svg>
<svg style="position:absolute;left:1261px;top:2px;" width="18" height="18" viewBox="0 0 18 18"><g transform="translate(9 9.5) rotate(-45)" fill="none" stroke="#f48771" stroke-width="1.3"><path d="M-9.5 0 H-6.3 M6.3 0 H9.5"/><path d="M-1.6 -3.3 H-3.2 A3.3 3.3 0 0 0 -3.2 3.3 H-1.6 Z"/><path d="M1.6 -3.3 H3.2 A3.3 3.3 0 0 1 3.2 3.3 H1.6 Z"/><path d="M-1.6 -1.6 H0.2 M-1.6 1.6 H0.2" stroke-width="1.1"/></g></svg>
<div style="position:absolute;left:365px;top:752px;width:923px;height:1px;background:#474747;"></div>
<div style="position:absolute;left:365px;top:753px;width:923px;height:146px;background:#1e1e1e;"></div>
<div id="t30" style="position:absolute;left:387.40px;top:760.19px;height:20px;line-height:20px;font-family:'Liberation Sans', sans-serif;font-size:11px;font-weight:400;color:#969696;letter-spacing:-0.786px;white-space:pre;">PROBLEMS</div>
<div style="position:absolute;left:454px;top:762px;width:22px;height:18px;border-radius:9px;background:#4d4d4d;color:#fff;font-family:'Liberation Sans', sans-serif;font-size:11px;line-height:18px;text-align:center">12</div>
<div id="t31" style="position:absolute;left:498.40px;top:760.19px;height:20px;line-height:20px;font-family:'Liberation Sans', sans-serif;font-size:11px;font-weight:400;color:#969696;letter-spacing:-0.600px;white-space:pre;">OUTPUT</div>
<div id="t32" style="position:absolute;left:565.00px;top:760.19px;height:20px;line-height:20px;font-family:'Liberation Sans', sans-serif;font-size:11px;font-weight:400;color:#e7e7e7;letter-spacing:-0.667px;white-space:pre;">DEBUG CONSOLE</div>
<div style="position:absolute;left:563px;top:785.5px;width:92px;height:1.5px;background:#e7e7e7;"></div>
<div id="t33" style="position:absolute;left:678.20px;top:760.19px;height:20px;line-height:20px;font-family:'Liberation Sans', sans-serif;font-size:11px;font-weight:400;color:#969696;letter-spacing:-0.572px;white-space:pre;">TERMINAL</div>
<div style="position:absolute;left:1284px;top:759px;width:4px;height:24px;background:#3c3c3c;"></div>
<div style="position:absolute;left:365px;top:844px;width:923px;height:55px;background:#2a2d2e;"></div>
<div style="position:absolute;left:395px;top:787.8px;height:19px;line-height:19px;font-family:'Liberation Mono', monospace;font-size:12.8px;letter-spacing:-0.680px;color:#f48771;white-space:pre">pydev debugger: unable to find translation for: &quot;/home/nmanovic/Workspace/cvat/cvat/apps/training/apis.py&quot; in [&quot;/home/nmanovic/Workspace/cvat/serverless/pytorch/facebookresearch/detectron2/retinanet/nucli</div>
<div style="position:absolute;left:395px;top:806.8px;height:19px;line-height:19px;font-family:'Liberation Mono', monospace;font-size:12.8px;letter-spacing:-0.680px;color:#f48771;white-space:pre">o/&quot;, &quot;/home/nmanovic/Workspace/cvat/serverless/pytorch/facebookresearch/detectron2/retinanet/nuclio&quot;] (please revise your path mapping)</div>
<div style="position:absolute;left:395px;top:844.8px;height:19px;line-height:19px;font-family:'Liberation Mono', monospace;font-size:12.8px;letter-spacing:-0.680px;color:#f48771;white-space:pre">pydev debugger: unable to find translation for: &quot;/home/nmanovic/Workspace/cvat/cvat-ui/src/components/create-project-page/create-project-content.tsx&quot; in [&quot;/home/nmanovic/Workspace/cvat/serverless/pytorch/f</div>
<div style="position:absolute;left:395px;top:863.8px;height:19px;line-height:19px;font-family:'Liberation Mono', monospace;font-size:12.8px;letter-spacing:-0.680px;color:#f48771;white-space:pre">acebookresearch/detectron2/retinanet/nuclio/&quot;, &quot;/home/nmanovic/Workspace/cvat/serverless/pytorch/facebookresearch/detectron2/retinanet/nuclio&quot;]</div>
</body></html>
